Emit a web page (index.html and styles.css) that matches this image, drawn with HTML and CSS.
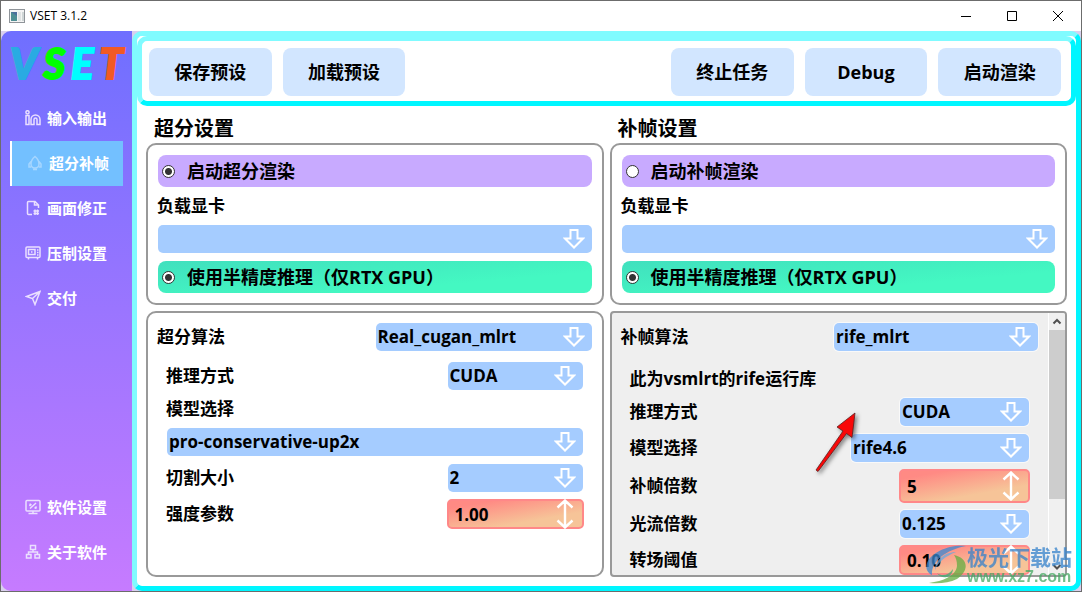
FILE: index.html
```html
<!DOCTYPE html>
<html lang="zh-CN">
<head>
<meta charset="utf-8">
<title>VSET 3.1.2</title>
<link rel="stylesheet" href="styles.css">
</head>
<body>
<svg class="defs" width="0" height="0" aria-hidden="true">
  <symbol id="down" viewBox="0 0 22 22"><path d="M7.500 2h7v8.500h5.500L11 19.500 2 10.500h5.500z" fill="none" stroke="#fff" stroke-width="2"/></symbol>
  <symbol id="updown" viewBox="0 0 18 30"><path d="M9 2v26M1.500 8.500L9 1.500l7.500 7M1.500 21.500L9 28.500l7.500-7" fill="none" stroke="#fff" stroke-width="2.400"/></symbol>
</svg>
<header class="titlebar">
  <svg class="app-icon" width="16" height="14" viewBox="0 0 16 14"><rect x=".5" y=".5" width="15" height="13" fill="#f4f4f4" stroke="#8f9499"/><rect x="2" y="3" width="6" height="9" fill="#4f8f94"/><path d="M2 3h6v4z" fill="#4c6f9c"/><rect x="9" y="3" width="3" height="9" fill="#dfe3e3"/><rect x="13" y="3" width="2" height="9" fill="#cfd6d6"/></svg>
  <span class="app-title">VSET 3.1.2</span>
  <button class="win-button" aria-label="最小化"><svg width="12" height="12" viewBox="0 0 12 12"><path d="M1 6.500h10"/></svg></button>
  <button class="win-button" aria-label="最大化"><svg width="12" height="12" viewBox="0 0 12 12"><path d="M1.500 1.500h9v9h-9z"/></svg></button>
  <button class="win-button" aria-label="关闭"><svg width="12" height="12" viewBox="0 0 12 12"><path d="M1 1l10 10M11 1L1 11"/></svg></button>
</header>
<div class="shell">
  <nav class="sidebar">
    <div class="logo"><span class="logo-v">V</span><span class="logo-s">S</span><span class="logo-e">E</span><span class="logo-t">T</span></div>
    <button class="nav-item"><svg viewBox="0 0 16 16"><circle cx="2.500" cy="2.300" r="1.600"/><path d="M1 5.500h3v9H1zM6 14.500V9.500a4.500 4.500 0 0 1 9 0v5h-3v-5a1.500 1.500 0 0 0-3 0v5z"/></svg>输入输出</button>
    <button class="nav-item nav-current"><svg class="faded" viewBox="0 0 16 16"><path d="M8 1.500C5 4 4 6 4 9s1 4 4 4 4-1 4-4-1-5-4-7.500zM4 6.500L2 9v3h2M12 6.500L14 9v3h-2M6 14.500h4"/></svg>超分补帧</button>
    <button class="nav-item"><svg viewBox="0 0 16 16"><path d="M7 14.500H3.500a1 1 0 0 1-1-1v-11a1 1 0 0 1 1-1H10L13.500 5v3M9.500 1.500V5h4M10 9.500v5.500M12.500 9.500v5.500M8.500 11h5.500M8.500 13.500h5.500"/></svg>画面修正</button>
    <button class="nav-item"><svg viewBox="0 0 16 16"><rect x="1" y="2" width="14" height="10.500" rx="1"/><rect x="3.500" y="4.500" width="6.500" height="5"/><path d="M6 7h1.500M12 5h1.500M12 7.500h1.500M12 10h1.500M3.500 12.500v2M12.500 12.500v2"/></svg>压制设置</button>
    <button class="nav-item"><svg viewBox="0 0 16 16"><path d="M1.500 6.500L15 1.500l-5 13-2.500-6zM7.500 8.500L15 1.500"/></svg>交付</button>
    <button class="nav-item nav-low"><svg viewBox="0 0 16 16"><rect x="1" y="1.500" width="14" height="10.500" rx="1"/><path d="M8 12v2.500M3.500 14.500h9M5 9.500L11 4M4.500 5l2 1M9.500 8.500l2 1M4.500 7l1.500-2M10 9.500l1.500-2"/></svg>软件设置</button>
    <button class="nav-item"><svg viewBox="0 0 16 16"><rect x="5.500" y="1.500" width="5" height="4"/><rect x="1.500" y="10.500" width="4.500" height="3.500"/><rect x="10" y="10.500" width="4.500" height="3.500"/><path d="M8 5.500V8M3.500 10.500V8h9v2.500"/></svg>关于软件</button>
  </nav>
  <main class="main">
    <div class="toolbar">
      <button class="tool">保存预设</button>
      <button class="tool">加载预设</button>
      <span class="tool-space"></span>
      <button class="tool">终止任务</button>
      <button class="tool">Debug</button>
      <button class="tool">启动渲染</button>
    </div>
    <div class="content">
      <section class="column">
        <h2 class="heading">超分设置</h2>
        <div class="panel basics">
          <label class="option option-violet"><input type="radio" name="sr-on" checked>启动超分渲染</label>
          <label class="label" for="sr-gpu">负载显卡</label>
          <span class="combo"><select id="sr-gpu"><option></option></select><svg><use href="#down"/></svg></span>
          <label class="option option-green"><input type="radio" name="sr-half" checked>使用半精度推理（仅RTX GPU）</label>
        </div>
        <div class="panel details">
          <div class="row"><label class="label" for="sr-alg">超分算法</label><span class="combo combo-algorithm"><select id="sr-alg"><option>Real_cugan_mlrt</option></select><svg><use href="#down"/></svg></span></div>
          <div class="fields">
            <div class="row"><label class="label" for="sr-mode">推理方式</label><span class="combo combo-small"><select id="sr-mode"><option>CUDA</option></select><svg><use href="#down"/></svg></span></div>
            <label class="label" for="sr-model">模型选择</label>
            <span class="combo"><select id="sr-model"><option>pro-conservative-up2x</option></select><svg><use href="#down"/></svg></span>
            <div class="row"><label class="label" for="sr-tile">切割大小</label><span class="combo combo-small"><select id="sr-tile"><option>2</option></select><svg><use href="#down"/></svg></span></div>
            <div class="row"><label class="label" for="sr-alpha">强度参数</label><span class="spin"><input id="sr-alpha" type="number" step="0.01" value="1.00"><svg><use href="#updown"/></svg></span></div>
          </div>
        </div>
      </section>
      <section class="column">
        <h2 class="heading">补帧设置</h2>
        <div class="panel basics">
          <label class="option option-violet"><input type="radio" name="vfi-on">启动补帧渲染</label>
          <label class="label" for="vfi-gpu">负载显卡</label>
          <span class="combo"><select id="vfi-gpu"><option></option></select><svg><use href="#down"/></svg></span>
          <label class="option option-green"><input type="radio" name="vfi-half" checked>使用半精度推理（仅RTX GPU）</label>
        </div>
        <div class="panel scroller">
          <div class="details viewport">
            <div class="row"><label class="label" for="vfi-alg">补帧算法</label><span class="combo combo-rife"><select id="vfi-alg"><option>rife_mlrt</option></select><svg><use href="#down"/></svg></span></div>
            <div class="fields fields-rife">
              <p class="label">此为vsmlrt的rife运行库</p>
              <div class="row"><label class="label" for="vfi-mode">推理方式</label><span class="combo combo-narrow"><select id="vfi-mode"><option>CUDA</option></select><svg><use href="#down"/></svg></span></div>
              <div class="row"><label class="label" for="vfi-model">模型选择</label><span class="combo combo-model"><select id="vfi-model"><option>rife4.6</option></select><svg><use href="#down"/></svg></span></div>
              <div class="row"><label class="label" for="vfi-times">补帧倍数</label><span class="spin spin-narrow spin-tall"><input id="vfi-times" type="number" value="5"><svg><use href="#updown"/></svg></span></div>
              <div class="row"><label class="label" for="vfi-flow">光流倍数</label><span class="combo combo-narrow"><select id="vfi-flow"><option>0.125</option></select><svg><use href="#down"/></svg></span></div>
              <div class="row"><label class="label" for="vfi-scene">转场阈值</label><span class="spin spin-narrow"><input id="vfi-scene" type="number" step="0.01" value="0.10"><svg><use href="#updown"/></svg></span></div>
            </div>
          </div>
          <div class="scrollbar">
            <svg viewBox="0 0 16 17"><path d="M4.500 10.500L8 7l3.500 3.500"/></svg>
            <span class="thumb"></span>
            <svg viewBox="0 0 16 17"><path d="M4.500 7L8 10.500 11.500 7"/></svg>
          </div>
        </div>
      </section>
    </div>
  </main>
</div>
<svg class="pointer" width="50" height="70" viewBox="0 0 50 70"><path d="M46 5L43 29.500 37.500 25.500 9 63.500 7 62 34 23 28 19z" fill="#f80808" stroke="#5a2020" stroke-width=".8"/></svg>
<div class="watermark">
  <svg width="42" height="42" viewBox="0 0 42 42"><path d="M41 2C25 0 6 8 2 19c-2 6 1 10 5 12C6 18 20 6 41 2z" fill="#3989d2"/><path d="M31 8c-12 0-21 9-21 18 3-8 11-14 21-18z" fill="#69a9df"/><path d="M29 11c14 3 16 15 3 24-8 4-18 5-28 4 14-2 27-7 28-17 0-5-1-8-3-11z" fill="#64ad41"/><path d="M12 29c5 4 12 2 16-4 0 8-11 12-16 4z" fill="#44ad71"/></svg>
  <div><div class="mark-name">极光下载站</div><div class="mark-site">www.xz7.com</div></div>
</div>
</body>
</html>
```

FILE: styles.css
```css
* { box-sizing: border-box; }

body {
  margin: 0;
  height: 100vh;
  display: flex;
  flex-direction: column;
  position: relative;
  overflow: hidden;
  border: 1px solid #6c6c6c;
  background: #fff;
  color: #000;
  font: bold 17px/22px "Open Sans", "Noto Sans CJK SC", sans-serif;
}

button, input, select { font: inherit; color: inherit; margin: 0; }
button { border: 0; padding: 0; background: none; }
.defs { position: absolute; }

.titlebar { display: flex; align-items: center; height: 30px; padding-left: 8px; }
.app-title { flex: 1; margin-left: 5px; font-size: 12px; font-weight: 400; }
.win-button { width: 46px; height: 30px; display: grid; place-items: center; }
.win-button svg { fill: none; stroke: #000; stroke-width: 1; }

.shell { flex: 1; min-height: 0; display: flex; background: #d9d0ee; }

.sidebar {
  width: 131px;
  display: flex;
  flex-direction: column;
  padding: 0 9px 16px;
  border-radius: 10px 0 0 10px;
  background: linear-gradient(#6f6fff, #c67bff);
}
.logo {
  display: flex;
  justify-content: space-between;
  height: 65px;
  font: italic 900 42px/65px Lato, sans-serif;
  -webkit-text-stroke: 2px;
}
.logo-v { color: #29abe2; }
.logo-s { color: #00ff00; }
.logo-e { color: #00ffff; }
.logo-t { color: #f15a24; }
.nav-item {
  display: flex;
  align-items: center;
  gap: 6px;
  height: 45px;
  padding: 0 0 2px 15px;
  color: #fff;
  font-size: 15px;
}
.nav-item svg { width: 16px; height: 16px; fill: none; stroke: #eadfff; stroke-width: 1.5; }
.nav-item .faded { stroke: #a6d6ff; }
.nav-current { border-left: 2px solid #fff; background: #73c0ff; }
.nav-low { margin-top: auto; }

.main {
  flex: 1;
  min-width: 0;
  display: flex;
  flex-direction: column;
  border: 5px solid;
  border-color: #80fbff #00f6ff #00f6ff #80fbff;
  border-radius: 10px;
  background: #fff;
}
.toolbar {
  display: flex;
  gap: 11px;
  height: 70px;
  padding: 7px 10px 5px 7px;
  border: 5px solid;
  border-color: #80fbff #00f6ff #00f6ff #80fbff;
  border-radius: 10px;
}
.tool { flex: 123 1 0; height: 48px; border-radius: 8px; background: #d2e6ff; font-size: 18px; }
.tool-space { flex: 244 1 0; }

.content { flex: 1; min-height: 0; display: flex; gap: 6px; padding: 9px; }
.column { flex: 1; min-width: 0; min-height: 0; display: flex; flex-direction: column; }
.heading { margin: 0; padding-left: 8px; font-size: 20px; line-height: 28px; }
.panel { border: 2px solid #999; border-radius: 10px; }
.basics { display: flex; flex-direction: column; gap: 8px; padding: 10px; margin-bottom: 6px; }
.label { margin: 0 0 0 -1px; }
.option {
  display: flex;
  align-items: center;
  gap: 12px;
  height: 32px;
  padding-left: 4px;
  border-radius: 8px;
  font-size: 18px;
}
.option-violet { background: #c8aaff; }
.option-green { background: linear-gradient(175deg, #40e0be, #44f8c2 70%); }
.option input {
  appearance: none;
  width: 13px;
  height: 13px;
  border: 1px solid #333;
  border-radius: 50%;
  background: #fff;
}
.option input:checked { background: radial-gradient(circle, #333 3px, #fff 4px); }

.details { flex: 1; min-height: 0; padding: 10px; }
.row { display: flex; align-items: center; justify-content: space-between; }
.fields { display: flex; flex-direction: column; gap: 8px; margin: 11px 9px 0; }
.fields-rife { margin-top: 17px; }

.combo, .spin { display: grid; align-items: center; justify-items: end; }
.combo > *, .spin > * { grid-area: 1 / 1; }
.combo svg, .spin svg { pointer-events: none; }
.combo select {
  appearance: none;
  width: 100%;
  height: 28px;
  padding: 0 2px;
  border: 0;
  border-radius: 5px;
  background: #a5ccff;
  box-shadow: 0 0 0 1px #ffffffa0;
}
.combo svg { width: 22px; height: 22px; margin-right: 7px; }
.combo-algorithm { width: 216px; }
.combo-small { width: 135px; }
.combo-rife { width: 204px; }
.combo-narrow { width: 129px; }
.combo-model { width: 178px; }
.spin { width: 137px; margin: -1px; }
.spin-narrow { width: 131px; }
.spin input {
  appearance: textfield;
  width: 100%;
  height: 30px;
  padding: 0 6px;
  border: 2px solid #ff8888;
  border-radius: 5px;
  background: linear-gradient(170deg, #ff8a84 15%, #f6c498 70%);
}
.spin input::-webkit-inner-spin-button { appearance: none; }
.spin-tall input { height: 34px; }
.spin svg { width: 18px; height: 30px; margin-right: 10px; }

.scroller { flex: 1; min-height: 0; display: flex; overflow: hidden; border-radius: 4px; background: #efefef; }
.viewport { overflow: hidden; }
.scrollbar { width: 17px; display: flex; flex-direction: column; border-left: 1px solid #fff; background: #f0f0f0; }
.scrollbar svg { height: 17px; fill: none; stroke: #505050; stroke-width: 2; }
.scrollbar svg:last-child { margin-top: auto; }
.thumb { height: 169px; background: #cdcdcd; }

.pointer { position: absolute; left: 808px; top: 407px; filter: drop-shadow(2px 2px 2px #00000080); }
.watermark { position: absolute; right: 9px; bottom: 5px; display: flex; align-items: center; opacity: 0.75; }
.mark-name { color: #3582cb; font-size: 21px; line-height: 24px; }
.mark-site { color: #45a962; font: bold 16px/16px "Liberation Sans", sans-serif; }
```
